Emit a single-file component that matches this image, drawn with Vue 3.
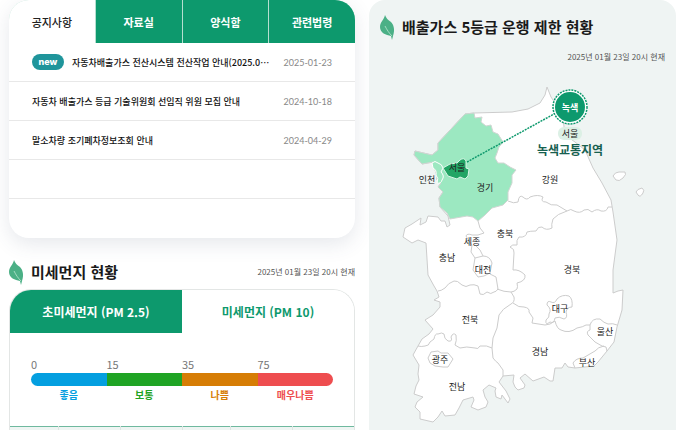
<script setup>
import { ref } from 'vue'

const boardTabs = ['공지사항', '자료실', '양식함', '관련법령']
const activeBoard = ref(0)

const notices = [
  { title: '자동차배출가스 전산시스템 전산작업 안내(2025.0…', date: '2025-01-23', isNew: true },
  { title: '자동차 배출가스 등급 기술위원회 선임직 위원 모집 안내', date: '2024-10-18' },
  { title: '말소차량 조기폐차정보조회 안내', date: '2024-04-29' },
  { title: '', date: '' },
  { title: '', date: '' }
]

const dustTabs = ['초미세먼지 (PM 2.5)', '미세먼지 (PM 10)']
const activeDust = ref(0)

const levels = [
  { from: 0, name: '좋음', tone: 'good' },
  { from: 15, name: '보통', tone: 'normal' },
  { from: 35, name: '나쁨', tone: 'bad' },
  { from: 75, name: '매우나쁨', tone: 'worst' }
]

const updated = '2025년 01월 23일 20시 현재'

const coast =
  'M474 113 L512 112 L528 109 L532 107 L540 103 L545 95 L547 87 L551 97 L555 103 L563 118 L565 135 L575 142 L585 150 L593 168 L602 183 L611 200 L613 212 L617 240 L613 270 L613 293 L618 291 L623 290 L622 310 L617 327 L614 342 L607 351 L598 362 L594 366 L575 368 L568 367 L565 363 L562 368 L555 368 L553 381 L550 381 L544 377 L533 381 L525 374 L520 378 L525 385 L524 388 L518 390 L515 387 L513 382 L514 375 L503 376 L499 382 L506 391 L510 399 L508 403 L502 395 L501 399 L496 397 L495 391 L496 388 L489 385 L483 390 L485 397 L488 402 L486 407 L478 410 L471 407 L474 400 L473 397 L463 400 L459 408 L455 415 L445 416 L442 411 L438 417 L433 422 L420 419 L420 412 L415 407 L417 402 L423 397 L414 394 L416 386 L419 380 L418 374 L419 365 L413 355 L418 346 L422 339 L429 334 L433 329 L425 320 L433 315 L440 307 L440 302 L434 300 L439 297 L437 291 L434 286 L428 275 L426 243 L418 240 L412 243 L403 237 L405 228 L412 224 L421 218 L420 225 L426 222 L428 216 L438 217 L441 221 L445 221 L447 227 L450 225 L448 216 L440 207 L439 198 L443 192 L438 187 L441 183 L437 180 L436 173 L433 162 L422 164 L414 155 L415 151 L432 155 L438 150 L438 143 L465 114 Z'

const gyeonggi =
  'M465 114 L474 113 L475 118 L482 117 L481 122 L486 126 L491 125 L493 132 L498 134 L503 142 L499 147 L497 153 L495 158 L498 163 L504 163 L510 167 L516 170 L512 175 L512 183 L508 192 L508 200 L503 205 L492 208 L485 215 L478 221 L473 217 L467 216 L450 219 L447 213 L440 207 L439 198 L443 192 L438 187 L441 183 L437 180 L436 173 L433 162 L422 164 L414 155 L415 151 L432 155 L438 150 L438 143 Z'

const borders = [
  'M508 201 Q514 204 518 202 Q519 194 523 197 Q527 201 530 197 Q538 194 543 197 Q540 202 546 202 Q551 206 557 205 L567 211 Q571 208 574 211 Q580 214 584 210 Q588 208 592 212 Q597 208 601 211 Q607 212 608 207 L612 207',
  'M567 211 Q557 214 553 219 Q551 225 552 228 Q546 231 542 227 Q538 226 536 231 Q530 231 527 232 Q526 238 519 237 Q516 240 517 245 Q512 244 510 247 Q515 249 514 253 L513 270 Q519 269 525 275 Q526 281 517 283 Q518 287 517 289 Q514 292 511 292 Q504 292 497 289',
  'M511 292 L514 297 Q515 302 511 304 Q502 309 499 315 L497 328 L493 338 L492 348 L493 358 Q496 362 498 363 L503 370 L503 376',
  'M513 303 Q519 308 524 307 Q530 308 529 312 L533 318 L532 323 L545 325 Q550 325 555 321 Q557 329 561 330 Q569 334 577 328 Q583 327 586 325 L590 325 Q592 318 600 319 Q604 323 608 324 Q613 323 617 325',
  'M418 346 Q421 347 425 346 Q429 346 430 342 L434 339 Q435 333 438 334 Q442 332 444 334 Q444 339 448 341 Q453 342 451 337 Q453 332 456 335 Q457 341 455 345 L460 348 Q466 346 475 348 Q478 350 480 346 Q487 345 492 348',
  'M478 221 L480 228 L484 233 Q478 236 472 235 Q467 233 466 236 L469 241 L472 245 L471 252 L475 258 L483 256 L480 250 L476 246',
  'M483 256 Q490 256 492 263 L490 273 L484 276 L478 277 L473 270 L475 258',
  'M490 274 L496 277 L498 289 Q496 292 494 292 Q491 295 487 292 Q483 296 480 294 L478 286 Q474 284 470 285 Q466 288 462 285 Q457 280 454 281 Q448 283 445 288 Q441 291 438 291',
  'M428 358 L431 352 L438 351 L441 353 L448 353 L453 359 L448 367 L443 367 L435 366 L430 363 Z',
  'M547 305 Q547 300 551 302 Q555 304 557 299 Q562 294 569 296 Q573 299 572 307 Q567 307 566 312 Q568 318 564 319 Q559 316 555 318 Q554 324 550 322 Q545 326 546 320 Q550 317 549 314 Q552 309 547 305 Z',
  'M590 325 L590 330 Q586 331 588 335 L595 342 L602 346 L606 347 L607 351',
  'M604 346 Q598 347 595 351 L583 358 Q576 358 573 363 L575 368'
]

const regions = [
  { name: '인천', x: 427, y: 183 },
  { name: '서울', x: 457, y: 171 },
  { name: '경기', x: 485, y: 191 },
  { name: '강원', x: 550, y: 183 },
  { name: '충북', x: 505, y: 237 },
  { name: '세종', x: 472, y: 245 },
  { name: '충남', x: 447, y: 261 },
  { name: '대전', x: 483, y: 273 },
  { name: '경북', x: 572, y: 273 },
  { name: '대구', x: 560, y: 312 },
  { name: '전북', x: 470, y: 323 },
  { name: '울산', x: 605, y: 335 },
  { name: '경남', x: 540, y: 355 },
  { name: '부산', x: 587, y: 366 },
  { name: '광주', x: 440, y: 363 },
  { name: '전남', x: 457, y: 390 }
]
</script>

<template>
  <main class="page" lang="ko">
    <div class="column">
      <section class="board">
        <div class="board-tabs">
          <button
            v-for="(tab, i) in boardTabs"
            :key="tab"
            type="button"
            :class="{ active: i === activeBoard }"
            @click="activeBoard = i"
          >{{ tab }}</button>
        </div>
        <ul class="notices">
          <li v-for="(item, i) in notices" :key="i">
            <span v-if="item.isNew" class="new">new</span>
            <a v-if="item.title" href="#">{{ item.title }}</a>
            <time v-if="item.date">{{ item.date }}</time>
          </li>
        </ul>
      </section>

      <section class="dust">
        <header class="heading">
          <svg class="leaf" viewBox="0 0 14 25" aria-hidden="true">
            <path d="M5 0C4 5 0 7 0 12C0 18 6 20 11 21L12 25L13 21C15 15 14 10 11 7C8 5 6 3 5 0Z" />
            <path class="vein" d="M5 11C7 15 9 18 12 21" />
          </svg>
          <h2>미세먼지 현황</h2>
          <p>{{ updated }}</p>
        </header>
        <div class="dust-card">
          <div class="dust-tabs">
            <button
              v-for="(tab, i) in dustTabs"
              :key="tab"
              type="button"
              :class="{ active: i === activeDust }"
              @click="activeDust = i"
            >{{ tab }}</button>
          </div>
          <ol class="scale">
            <li v-for="level in levels" :key="level.name" :class="level.tone">
              <span class="from">{{ level.from }}</span>
              <span class="bar"></span>
              <span class="name">{{ level.name }}</span>
            </li>
          </ol>
          <table class="readings">
            <colgroup>
              <col class="narrow"><col><col><col class="narrow"><col><col>
            </colgroup>
            <thead>
              <tr><th v-for="n in 6" :key="n"></th></tr>
            </thead>
          </table>
        </div>
      </section>
    </div>

    <section class="limits">
      <header class="heading">
        <svg class="leaf" viewBox="0 0 14 25" aria-hidden="true">
          <path d="M5 0C4 5 0 7 0 12C0 18 6 20 11 21L12 25L13 21C15 15 14 10 11 7C8 5 6 3 5 0Z" />
          <path class="vein" d="M5 11C7 15 9 18 12 21" />
        </svg>
        <h2>배출가스 5등급 운행 제한 현황</h2>
      </header>
      <p class="updated">{{ updated }}</p>
      <svg class="map" viewBox="369 68 307 362">
        <path class="land" :d="coast" />
        <path v-for="(d, i) in borders" :key="i" class="border" :d="d" />
        <path class="land" d="M613 176Q615 172 619 172L625 172Q627 174 623 178Q619 182 616 180Z" />
        <path class="land" d="M636 192Q637 189 642 188Q645 190 643 193Q640 198 638 195Z" />
        <path class="gyeonggi" :d="gyeonggi" />
        <path class="incheon" d="M432 163Q435 160 438 163Q442 164 443 168L441 172Q445 176 442 180Q441 184 437 183Q439 178 436 175Q437 170 433 168Z" />
        <path class="seoul" d="M443 168L450 164L457 163L460 160Q464 157 466 161L466 168L469 169L468 176L465 179L460 177L457 179L448 176Z" />
        <text v-for="r in regions" :key="r.name" class="region" :x="r.x" :y="r.y">{{ r.name }}</text>
        <path class="link" d="M467 162L554 114" />
        <circle class="halo" cx="570" cy="107" r="17" />
        <circle class="disc" cx="570" cy="107" r="15" />
        <text class="disc-label" x="570" y="111">녹색</text>
        <rect class="chip" x="558" y="127" width="24" height="13" rx="6" />
        <text class="region" x="570" y="137">서울</text>
        <text class="zone" x="570" y="155">녹색교통지역</text>
      </svg>
    </section>
  </main>
</template>

<style>
body {
  margin: 0;
  background: #fff;
}
</style>

<style scoped>
* {
  box-sizing: border-box;
}
.page {
  display: grid;
  grid-template-columns: 346fr 307fr;
  gap: 14px;
  height: 100vh;
  padding: 0 4px 0 9px;
  overflow: hidden;
  font-family: "Noto Sans CJK KR", sans-serif;
  color: #222;
}
h2,
p,
ul,
ol {
  margin: 0;
  padding: 0;
  list-style: none;
}
button {
  padding: 0;
  border: 0;
  font-family: inherit;
  cursor: pointer;
}
.column {
  display: flex;
  flex-direction: column;
  gap: 22px;
  min-width: 0;
}
.board {
  border-radius: 20px;
  background: #fff;
  box-shadow: 0 6px 20px rgba(60, 80, 110, 0.13);
}
.board-tabs {
  display: grid;
  grid-template-columns: repeat(4, 1fr);
  gap: 1px;
  border-radius: 20px 20px 0 0;
  overflow: hidden;
  background: #b5dfd0;
}
.board-tabs button {
  height: 43px;
  background: #0d996d;
  color: #fff;
  font-size: 11px;
  font-weight: 700;
}
.board-tabs .active {
  background: #fff;
  color: #222;
  font-weight: 500;
}
.notices li {
  display: flex;
  align-items: center;
  height: 39px;
  padding: 0 23px;
  border-bottom: 1px solid #e8e8e8;
  font-size: 9px;
}
.notices li:last-child {
  border-bottom: 0;
}
.notices a {
  color: #111;
  font-weight: 500;
  text-decoration: none;
  white-space: nowrap;
}
.notices time {
  margin-left: auto;
  color: #888;
  font-family: Lato, sans-serif;
  white-space: nowrap;
}
.new {
  width: 32px;
  height: 16px;
  margin-right: 8px;
  flex: none;
  border-radius: 8px;
  background: #1f959b;
  color: #fff;
  font: 800 9px/15px Inter, sans-serif;
  text-align: center;
}
.heading {
  display: flex;
  align-items: center;
  height: 24px;
}
.leaf {
  width: 14px;
  height: 25px;
  flex: none;
  fill: #4bb086;
}
.vein {
  fill: none;
  stroke: #a5dcc2;
}
h2 {
  margin-left: 8px;
  font-size: 15px;
  font-weight: 700;
  line-height: 24px;
  color: #1a1a1a;
  white-space: nowrap;
}
.heading p {
  margin-left: auto;
}
p {
  font-size: 8px;
  line-height: 12px;
  color: #555;
  white-space: nowrap;
}
.dust {
  display: flex;
  flex-direction: column;
  gap: 5px;
}
.dust-card {
  border: 1px solid #e3e6e5;
  border-bottom: 0;
  border-radius: 22px 22px 0 0;
  overflow: hidden;
}
.dust-tabs {
  display: grid;
  grid-template-columns: 1fr 1fr;
}
.dust-tabs button {
  height: 43px;
  background: #fff;
  color: #0d996d;
  font-size: 12px;
  font-weight: 700;
}
.dust-tabs .active {
  background: #0d996d;
  color: #fff;
}
.scale {
  display: grid;
  grid-template-columns: repeat(4, 1fr);
  padding: 23px 21px 22px;
}
.scale li {
  display: flex;
  flex-direction: column;
}
.from {
  font-size: 11px;
  line-height: 17px;
  color: #777;
}
.bar {
  height: 13px;
  background: currentColor;
}
.scale li:first-child .bar {
  border-radius: 7px 0 0 7px;
}
.scale li:last-child .bar {
  border-radius: 0 7px 7px 0;
}
.name {
  font-size: 10px;
  font-weight: 700;
  line-height: 18px;
  text-align: center;
}
.good { color: #049fe0; }
.normal { color: #1fa424; }
.bad { color: #d67d05; }
.worst { color: #ee4d4f; }
.readings {
  width: 100%;
  table-layout: fixed;
  border-collapse: collapse;
  border-top: 1px solid #6fb99f;
}
.readings .narrow {
  width: 48px;
}
.readings th {
  height: 20px;
  padding: 0;
  border-left: 1px solid #dde5e2;
  background: #eff5f3;
}
.readings th:first-child {
  border-left: 0;
}
.limits {
  min-width: 0;
  padding-top: 15px;
  border-radius: 16px;
  background: #eff4f3;
  overflow: hidden;
}
.limits .heading {
  padding-left: 11px;
}
.updated {
  margin: 12px 11px 5px;
  text-align: right;
}
.map {
  display: block;
  width: 100%;
}
.land {
  fill: #fff;
  stroke: #ccc;
  stroke-linejoin: round;
}
.border {
  fill: none;
  stroke: #ccc;
  stroke-linejoin: round;
}
.gyeonggi {
  fill: #9ce8c1;
  stroke: #d0d5d2;
  stroke-linejoin: round;
}
.incheon {
  fill: #9ce8c1;
  stroke: #fff;
}
.seoul {
  fill: #22a565;
  stroke: #d8f5e6;
  stroke-linejoin: round;
}
.region,
.disc-label,
.zone {
  font-size: 9px;
  text-anchor: middle;
  fill: #222;
}
.link {
  stroke: #0d996d;
  stroke-width: 1.5;
  stroke-dasharray: 2 1;
}
.halo {
  fill: #fff;
  stroke: #0d996d;
  stroke-width: 1.5;
  stroke-dasharray: 2 1;
}
.disc {
  fill: #0d996d;
}
.disc-label {
  fill: #fff;
  font-weight: 700;
}
.chip {
  fill: #dcf0e5;
}
.zone {
  fill: #17604f;
  font-size: 12px;
  font-weight: 700;
}
</style>
